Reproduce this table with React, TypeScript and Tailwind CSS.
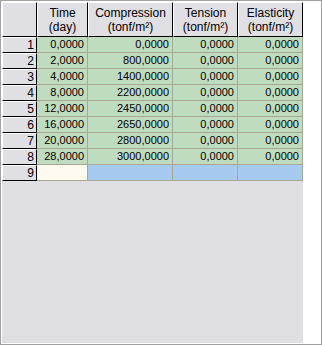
import React from "react";

const cols = [
  { title: "Time", unit: "(day)", w: "w-[51px]" },
  { title: "Compression", unit: "(tonf/m²)", w: "w-[85px]" },
  { title: "Tension", unit: "(tonf/m²)", w: "w-[65px]" },
  { title: "Elasticity", unit: "(tonf/m²)", w: "w-[65px]" },
];

const rows = [
  ["0,0000", "0,0000", "0,0000", "0,0000"],
  ["2,0000", "800,0000", "0,0000", "0,0000"],
  ["4,0000", "1400,0000", "0,0000", "0,0000"],
  ["8,0000", "2200,0000", "0,0000", "0,0000"],
  ["12,0000", "2450,0000", "0,0000", "0,0000"],
  ["16,0000", "2650,0000", "0,0000", "0,0000"],
  ["20,0000", "2800,0000", "0,0000", "0,0000"],
  ["28,0000", "3000,0000", "0,0000", "0,0000"],
];

const hdr =
  "border-t border-l border-t-white border-l-white border-r border-b border-r-black border-b-black bg-[#e0dfe3]";

export default function App() {
  return (
    <div
      className="w-[322px] h-[345px] border border-[#a0a0a0] bg-white p-[1px] pb-[1px] flex"
      style={{ fontFamily: '"Liberation Sans", Arial, sans-serif' }}
    >
      <div className="w-[301px] h-full bg-[#e0dfe3] text-black">
        {/* header row */}
        <div className="flex h-[35px]">
          <div className={`w-[35px] h-full ${hdr}`} />
          {cols.map((c) => (
            <div
              key={c.title}
              className={`${c.w} h-full ${hdr} flex flex-col items-center justify-center text-[12px] leading-[14px]`}
            >
              <span>{c.title}</span>
              <span>{c.unit}</span>
            </div>
          ))}
        </div>

        {rows.map((r, i) => (
          <div key={i} className="flex h-[16px]">
            <div
              className={`w-[35px] h-full ${hdr} flex items-center justify-end pr-[2px] text-[12px]`}
            >
              {i + 1}
            </div>
            {r.map((v, j) => (
              <div
                key={j}
                className={`${cols[j].w} h-full bg-[#c0dcc0] border-r border-b border-[#a8a796] flex items-center justify-end pr-[3px] text-[11px] leading-none`}
              >
                {v}
              </div>
            ))}
          </div>
        ))}

        {/* new row */}
        <div className="flex h-[16px]">
          <div
            className={`w-[35px] h-full ${hdr} flex items-center justify-end pr-[2px] text-[12px]`}
          >
            9
          </div>
          <div className="w-[51px] h-full bg-[#fffbf0] border-r border-b border-[#a8a796]" />
          <div className="w-[85px] h-full bg-[#a6caf0] border-r border-b border-[#a8a796]" />
          <div className="w-[65px] h-full bg-[#a6caf0] border-r border-b border-[#a8a796]" />
          <div className="w-[65px] h-full bg-[#a6caf0] border-r border-b border-[#a8a796]" />
        </div>
      </div>
    </div>
  );
}
